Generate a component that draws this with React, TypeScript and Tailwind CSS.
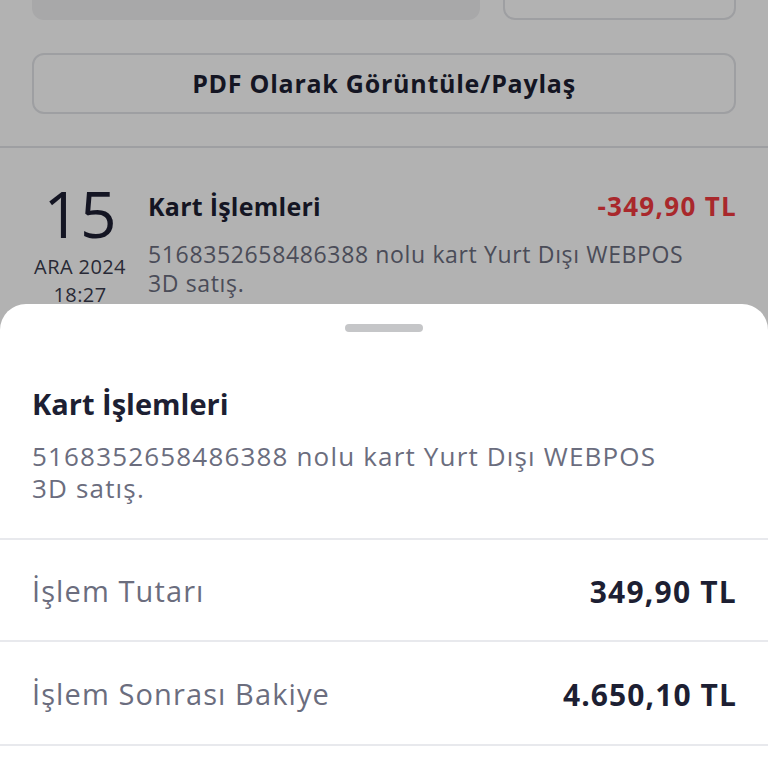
export default function App() {
  return (
    <div
      className="relative h-[768px] w-[768px] overflow-hidden bg-white"
      style={{ fontFamily: "'Open Sans', 'Noto Sans', sans-serif" }}
    >
      {/* Page under the sheet */}
      <div className="px-8">
        <div className="-mt-[40px] flex h-[60px] gap-[23px]">
          <div className="flex-1 rounded-xl bg-[#f1f1f3]" />
          <div className="w-[233px] rounded-xl border-2 border-[#e3e4e8]" />
        </div>
        <div className="mt-[33px] flex h-[61px] items-center justify-center rounded-xl border-2 border-[#e3e4e8]">
          <span className="text-[25px] font-bold tracking-[0.03em] text-[#1d1f33]">
            PDF Olarak Görüntüle/Paylaş
          </span>
        </div>
      </div>
      <div className="mt-[32px] h-[2px] bg-[#e3e4e8]" />
      <div className="flex gap-5 px-8 pt-[40px]">
        <div className="flex w-[96px] flex-col items-center">
          <span className="text-[64px] leading-[52px] text-[#1d1f33]">15</span>
          <span className="mt-[13px] text-[20px] leading-[28px] tracking-[0.02em] text-[#3a3c4e]">
            ARA 2024
          </span>
          <span className="text-[20px] leading-[28px] tracking-[0.02em] text-[#3a3c4e]">
            18:27
          </span>
        </div>
        <div className="flex-1">
          <div className="flex items-center justify-between">
            <span className="text-[25px] font-bold leading-[36px] tracking-[0.01em] text-[#1d1f33]">
              Kart İşlemleri
            </span>
            <span className="-mr-[1px] text-[26px] font-bold leading-[36px] tracking-[0.05em] text-[#f23a40]">
              -349,90 TL
            </span>
          </div>
          <p className="mt-[16px] text-[23px] leading-[29px] tracking-[0.028em] text-[#6b6d7e]">
            5168352658486388 nolu kart Yurt Dışı WEBPOS
            <br />
            3D satış.
          </p>
        </div>
      </div>

      {/* Dim overlay */}
      <div className="absolute inset-0 bg-black/30" />

      {/* Bottom sheet */}
      <div className="absolute inset-x-0 top-[304px] bottom-0 rounded-t-[26px] bg-white">
        <div className="flex justify-center pt-[20px]">
          <div className="h-[8px] w-[78px] rounded-full bg-[#c5c6c8]" />
        </div>
        <div className="px-8 pt-[54px]">
          <h2 className="text-[29px] font-bold leading-[36px] text-[#1d1f33]">
            Kart İşlemleri
          </h2>
          <p className="mt-[18px] text-[26px] leading-[32px] tracking-[0.045em] text-[#6b6d7e]">
            5168352658486388 nolu kart Yurt Dışı WEBPOS
            <br />
            3D satış.
          </p>
        </div>
        <div className="mt-[34px] h-[2px] bg-[#e8e9ed]" />
        <div className="flex h-[100px] items-center justify-between px-8 pt-[2px]">
          <span className="text-[29px] tracking-[0.038em] text-[#6b6d7e]">İşlem Tutarı</span>
          <span className="-mr-[1px] text-[30px] font-bold tracking-[0.04em] text-[#1d1f33]">
            349,90 TL
          </span>
        </div>
        <div className="h-[2px] bg-[#e8e9ed]" />
        <div className="flex h-[102px] items-center justify-between px-8 pt-[2px]">
          <span className="text-[29px] tracking-[0.038em] text-[#6b6d7e]">
            İşlem Sonrası Bakiye
          </span>
          <span className="-mr-[1px] text-[30px] font-bold tracking-[0.036em] text-[#1d1f33]">
            4.650,10 TL
          </span>
        </div>
        <div className="h-[2px] bg-[#e8e9ed]" />
      </div>
    </div>
  );
}
